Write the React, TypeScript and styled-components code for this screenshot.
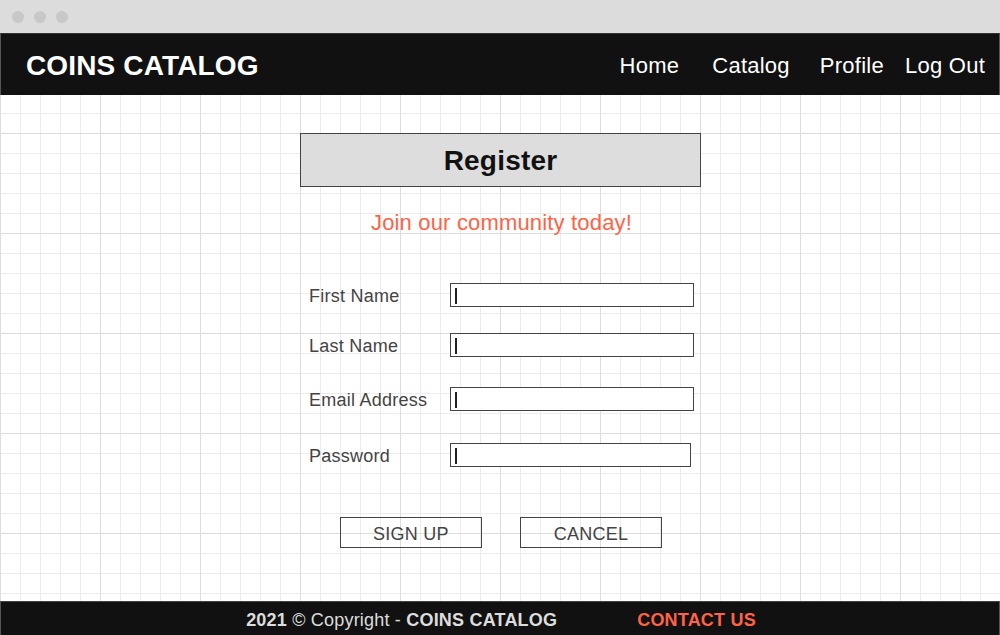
import React from "react";
import styled, { createGlobalStyle } from "styled-components";

const GlobalStyle = createGlobalStyle`
  html, body { margin: 0; padding: 0; }
  body { font-family: "Liberation Sans", Arial, sans-serif; background: #fff; }
  * { box-sizing: border-box; }
`;

const Window = styled.div`
  width: 1000px;
  height: 635px;
  display: flex;
  flex-direction: column;
  overflow: hidden;
`;

const TitleBar = styled.div`
  height: 33px;
  background: #dcdcdc;
  display: flex;
  align-items: center;
  gap: 10px;
  padding-left: 12px;
`;

const Dot = styled.span`
  width: 12px;
  height: 12px;
  border-radius: 50%;
  background: #c8c8c8;
`;

const NavBar = styled.header`
  height: 62px;
  background: #111;
  border-top: 1px solid #333;
  border-left: 1px solid #555;
  border-right: 1px solid #555;
  display: flex;
  align-items: center;
  padding: 2px 14px 0 25px;
`;

const Logo = styled.div`
  color: #fff;
  font-weight: 700;
  font-size: 28px;
  letter-spacing: 0.15px;
`;

const NavLinks = styled.nav`
  margin-left: auto;
  display: flex;
  align-items: center;
`;

const NavLink = styled.a<{ $ml: number }>`
  color: #fff;
  font-size: 22px;
  letter-spacing: 0.25px;
  text-decoration: none;
  margin-left: ${(p) => p.$ml}px;
`;

const Main = styled.main`
  flex: 1;
  display: flex;
  flex-direction: column;
  align-items: center;
  padding-top: 38px;
  background-color: #fff;
  background-image:
    linear-gradient(to right, #dddddd 1px, transparent 1px),
    linear-gradient(to bottom, #dddddd 1px, transparent 1px),
    linear-gradient(to right, #ececec 1px, transparent 1px),
    linear-gradient(to bottom, #ececec 1px, transparent 1px);
  background-size: 100px 100px, 100px 100px, 20px 20px, 20px 20px;
  background-position: 0 38px, 0 38px, 0 18px, 0 18px;
`;

const TitleBox = styled.h1`
  margin: 0;
  width: 401px;
  height: 54px;
  margin-left: 1px;
  padding-top: 2px;
  background: #dddddd;
  border: 1px solid #444;
  display: flex;
  align-items: center;
  justify-content: center;
  font-size: 28px;
  font-weight: 700;
  letter-spacing: 0.2px;
  color: #111;
`;

const Subtitle = styled.p`
  margin: 23px 0 0 3px;
  line-height: 26px;
  font-size: 22px;
  letter-spacing: 0.17px;
  color: #ff6347;
`;

const Form = styled.form`
  margin-top: 47px;
  margin-left: 3px;
  width: 385px;
  display: flex;
  flex-direction: column;
`;

const Row = styled.div<{ $mt: number }>`
  display: grid;
  grid-template-columns: 141px 1fr;
  align-items: center;
  margin-top: ${(p) => p.$mt}px;
`;

const Label = styled.label`
  font-size: 18px;
  letter-spacing: 0.25px;
  color: #444;
  padding-top: 2px;
`;

const Field = styled.div<{ $w: number }>`
  width: ${(p) => p.$w}px;
  height: 24px;
  border: 1px solid #444;
  background: #fff;
  display: flex;
  align-items: center;
  padding-left: 4px;
`;

const Caret = styled.span`
  width: 2px;
  height: 16px;
  background: #222;
  margin-top: 1px;
`;

const Buttons = styled.div`
  margin-top: 50px;
  margin-left: 2px;
  display: flex;
  gap: 38px;
`;

const Button = styled.button`
  width: 142px;
  height: 31px;
  border: 1px solid #444;
  background: transparent;
  font-family: "Liberation Sans", Arial, sans-serif;
  font-size: 18px;
  letter-spacing: 0.25px;
  color: #444;
  padding: 4px 0 0;
  cursor: pointer;
`;

const Footer = styled.footer`
  height: 34px;
  background: #111;
  border-top: 1px solid #444;
  border-left: 1px solid #555;
  border-right: 1px solid #555;
  display: flex;
  align-items: center;
  justify-content: center;
  gap: 80px;
  font-size: 18px;
  letter-spacing: 0.2px;
  padding: 3px 0 0 2px;
`;

const Copy = styled.span`
  color: #ddd;
  b { font-weight: 700; }
`;

const Contact = styled.a`
  color: #ff6347;
  font-weight: 700;
  text-decoration: none;
`;

const fields = [
  { label: "First Name", mt: 0, w: 244 },
  { label: "Last Name", mt: 26, w: 244 },
  { label: "Email Address", mt: 30, w: 244 },
  { label: "Password", mt: 32, w: 241 },
];

const links = [
  { text: "Home", ml: 0 },
  { text: "Catalog", ml: 33 },
  { text: "Profile", ml: 30 },
  { text: "Log Out", ml: 21 },
];

export default function App() {
  return (
    <>
      <GlobalStyle />
      <Window>
        <TitleBar>
          <Dot />
          <Dot />
          <Dot />
        </TitleBar>
        <NavBar>
          <Logo>COINS CATALOG</Logo>
          <NavLinks>
            {links.map((l) => (
              <NavLink key={l.text} href="#" $ml={l.ml}>
                {l.text}
              </NavLink>
            ))}
          </NavLinks>
        </NavBar>
        <Main>
          <TitleBox>Register</TitleBox>
          <Subtitle>Join our community today!</Subtitle>
          <Form onSubmit={(e) => e.preventDefault()}>
            {fields.map((f) => (
              <Row key={f.label} $mt={f.mt}>
                <Label>{f.label}</Label>
                <Field $w={f.w}>
                  <Caret />
                </Field>
              </Row>
            ))}
          </Form>
          <Buttons>
            <Button type="button">SIGN UP</Button>
            <Button type="button">CANCEL</Button>
          </Buttons>
        </Main>
        <Footer>
          <Copy>
            <b>2021</b> © Copyright - <b>COINS CATALOG</b>
          </Copy>
          <Contact href="#">CONTACT US</Contact>
        </Footer>
      </Window>
    </>
  );
}
